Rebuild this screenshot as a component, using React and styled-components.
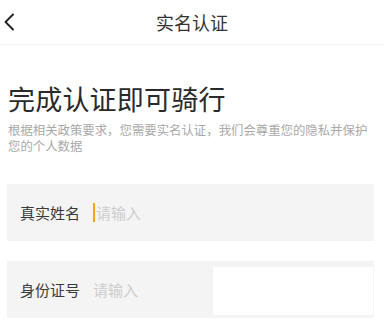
import React from 'react';
import styled, { createGlobalStyle } from 'styled-components';

const GlobalStyle = createGlobalStyle`
  html, body {
    margin: 0;
    padding: 0;
    background: #fff;
    font-family: "Noto Sans CJK SC", "Noto Sans", sans-serif;
  }
`;

const Page = styled.div`
  width: 384px;
  height: 322px;
  overflow: hidden;
  background: #fff;
`;

const Header = styled.header`
  position: relative;
  height: 44px;
  display: flex;
  align-items: center;
  justify-content: center;
  border-bottom: 1px solid #f1f1f1;
`;

const BackButton = styled.button`
  position: absolute;
  left: 1px;
  top: 12px;
  padding: 0;
  border: none;
  background: none;
  width: 16px;
  height: 20px;
  display: flex;
  align-items: center;
  justify-content: center;
`;

const Title = styled.h1`
  margin: 0;
  font-size: 18px;
  font-weight: 400;
  color: #333;
  line-height: 22px;
`;

const Content = styled.main`
  padding: 36px 10px 0 8px;
`;

const Heading = styled.h2`
  margin: 0;
  font-size: 27px;
  font-weight: 400;
  line-height: 36px;
  color: #2a2a2a;
  letter-spacing: 0.2px;
`;

const Desc = styled.p`
  margin: 5px 0 0;
  width: 362px;
  font-size: 12.4px;
  line-height: 16px;
  color: #a9a9a9;
`;

const Form = styled.form`
  margin-top: 30px;
  display: flex;
  flex-direction: column;
  gap: 20px;
  margin-left: -1px;
`;

const Field = styled.label`
  position: relative;
  height: 57px;
  display: flex;
  align-items: center;
  padding-left: 13px;
  background: #f4f4f4;
`;

const Label = styled.span`
  width: 60px;
  font-size: 15px;
  font-weight: 400;
  color: #3a3a3a;
  margin-right: 13px;
`;

const Input = styled.input`
  flex: 1;
  min-width: 0;
  border: none;
  outline: none;
  background: transparent;
  padding: 0;
  font-family: inherit;
  font-size: 15px;
  color: #333;
  &::placeholder {
    color: #cdcdcd;
  }
`;

const Caret = styled.span`
  width: 2px;
  height: 19px;
  background: #f5a31a;
  margin-right: 1px;
`;

const Cover = styled.div`
  position: absolute;
  top: 6px;
  right: 1px;
  bottom: 3px;
  width: 160px;
  background: #fff;
`;

export default function App() {
  return (
    <Page>
      <GlobalStyle />
      <Header>
        <BackButton type="button" aria-label="返回">
          <svg width="12" height="18" viewBox="0 0 12 18" fill="none">
            <path d="M10 1.5 L2.5 9 L10 16.5" stroke="#222" strokeWidth="1.9" strokeLinecap="round" strokeLinejoin="round" />
          </svg>
        </BackButton>
        <Title>实名认证</Title>
      </Header>
      <Content>
        <Heading>完成认证即可骑行</Heading>
        <Desc>根据相关政策要求，您需要实名认证，我们会尊重您的隐私并保护您的个人数据</Desc>
        <Form>
          <Field>
            <Label>真实姓名</Label>
            <Caret />
            <Input placeholder="请输入" />
          </Field>
          <Field>
            <Label>身份证号</Label>
            <Input placeholder="请输入" />
            <Cover />
          </Field>
        </Form>
      </Content>
    </Page>
  );
}
